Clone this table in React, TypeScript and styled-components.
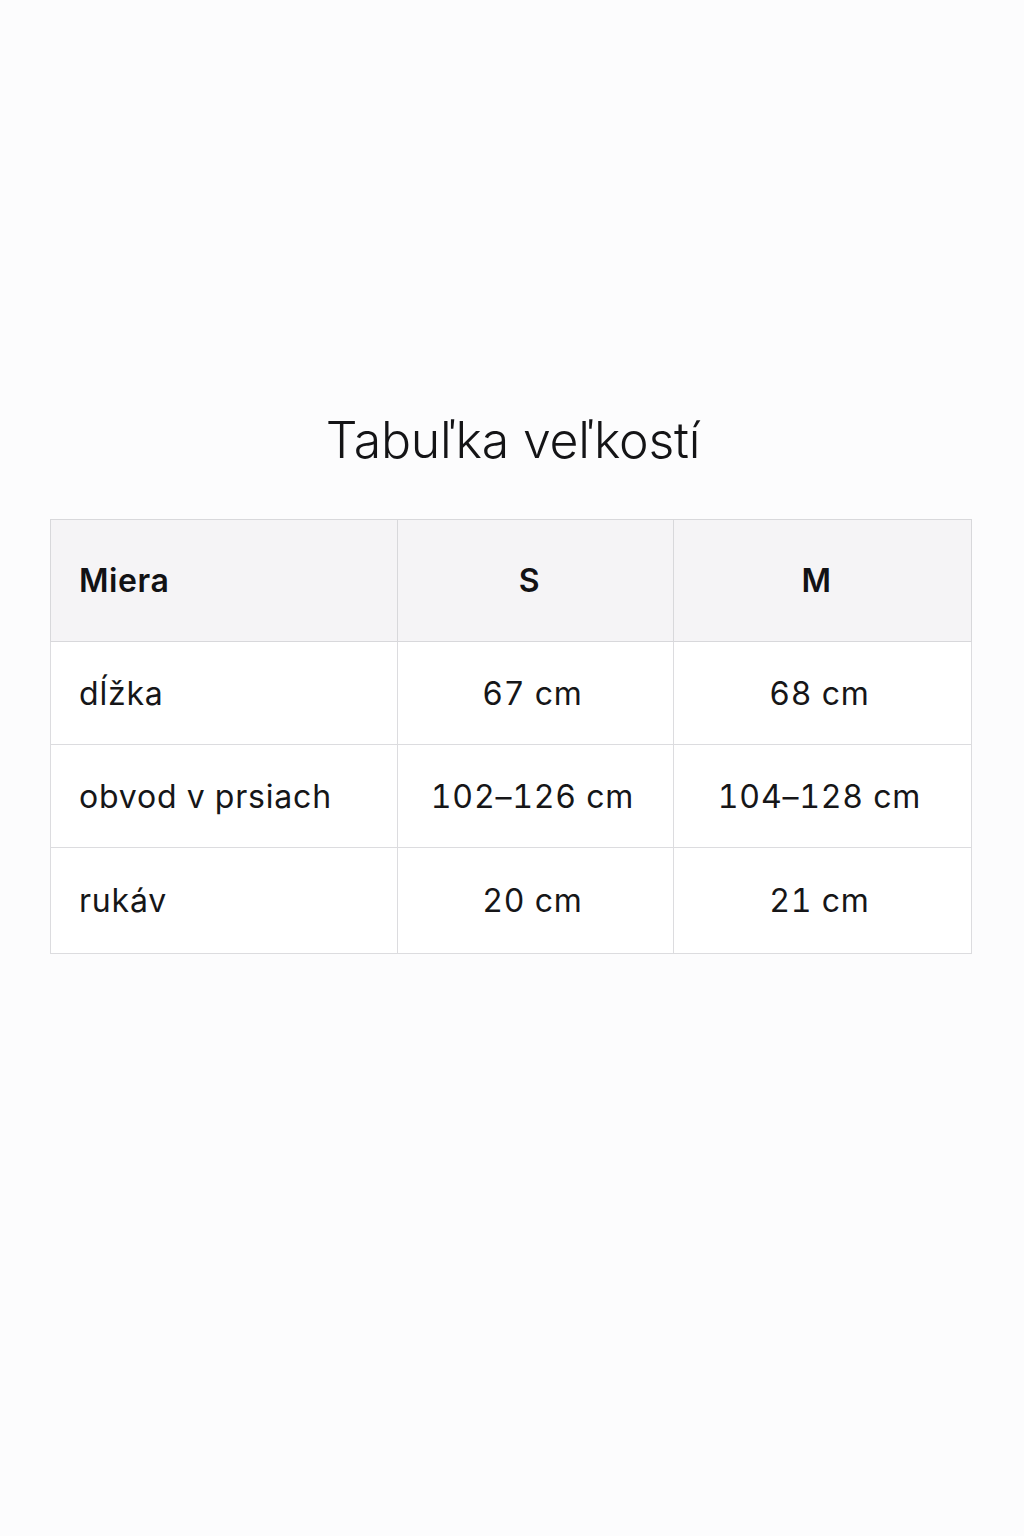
import styled, { createGlobalStyle } from 'styled-components';

const GlobalStyle = createGlobalStyle`
  html, body {
    margin: 0;
    padding: 0;
    background: #fcfcfd;
  }
  body {
    font-family: Inter, 'Open Sans', sans-serif;
    color: #161618;
  }
`;

const rows = [
  { label: 'dĺžka', s: '67 cm', m: '68 cm' },
  { label: 'obvod v prsiach', s: '102–126 cm', m: '104–128 cm' },
  { label: 'rukáv', s: '20 cm', m: '21 cm' },
];

const App: React.FC = () => {
  return (
    <Page>
      <GlobalStyle />
      <Title>Tabuľka veľkostí</Title>
      <Table>
        <colgroup>
          <col style={{ width: 347 }} />
          <col style={{ width: 276 }} />
          <col style={{ width: 298 }} />
        </colgroup>
        <thead>
          <tr>
            <Head $align="left">Miera</Head>
            <Head>S</Head>
            <Head>M</Head>
          </tr>
        </thead>
        <tbody>
          {rows.map((row) => (
            <Row key={row.label}>
              <Cell $align="left">{row.label}</Cell>
              <Cell>{row.s}</Cell>
              <Cell>{row.m}</Cell>
            </Row>
          ))}
        </tbody>
      </Table>
    </Page>
  );
};
export default App;

const Page = styled.div`
  width: 1024px;
  height: 1536px;
  box-sizing: border-box;
  padding: 407px 0 0 50px;
  display: flex;
  flex-direction: column;
  align-items: flex-start;
`;

const Title = styled.h1`
  width: 926px;
  margin: 0 0 45px 0;
  text-align: center;
  font-size: 50px;
  font-weight: 300;
  line-height: 67px;
  letter-spacing: -0.2px;
  color: #141416;
`;

const Table = styled.table`
  width: 921px;
  border-collapse: collapse;
  table-layout: fixed;
  background: #ffffff;
`;

const Row = styled.tr`
  &:last-child td {
    height: 106px;
  }
`;

const Head = styled.th<{ $align?: 'left' | 'center' }>`
  height: 122px;
  box-sizing: border-box;
  padding: ${(p) => (p.$align === 'left' ? '0 28px' : '0 34px 0 22px')};
  background: #f5f4f6;
  border: 1px solid #d8d8db;
  text-align: ${(p) => p.$align ?? 'center'};
  font-size: 32px;
  font-weight: 600;
  letter-spacing: 0.6px;
  color: #121214;
`;

const Cell = styled.td<{ $align?: 'left' | 'center' }>`
  height: 103px;
  box-sizing: border-box;
  padding: ${(p) => (p.$align === 'left' ? '0 28px' : '0 28px 0 22px')};
  border: 1px solid #dcdcdf;
  text-align: ${(p) => p.$align ?? 'center'};
  font-size: 32px;
  font-weight: 400;
  letter-spacing: 0.8px;
  font-variant-numeric: tabular-nums;
  color: #161618;
`;
